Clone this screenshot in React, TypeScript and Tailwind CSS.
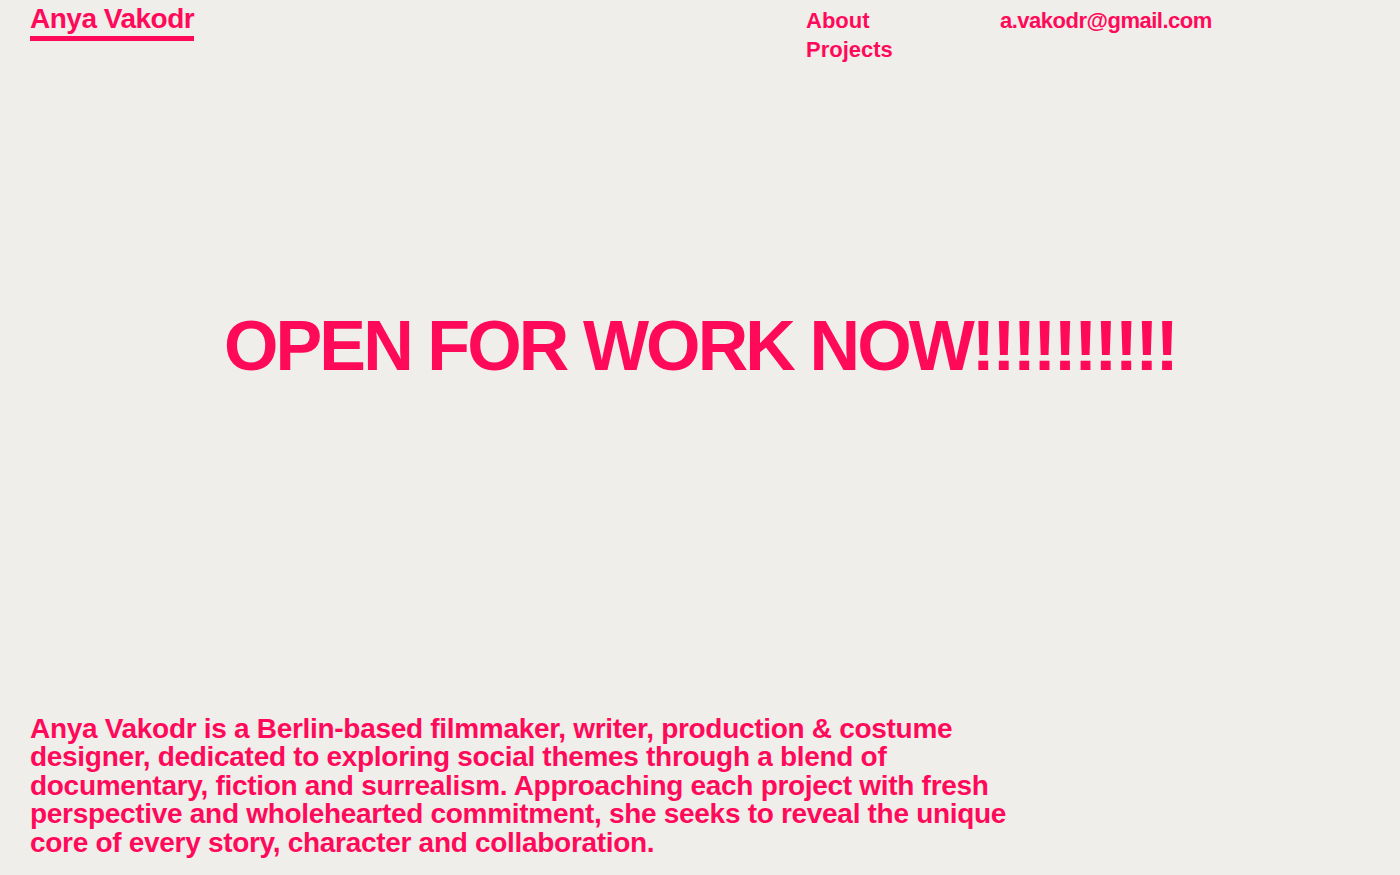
const pink = 'text-[#ff0a5a]';

const Header = () => {
    return (
        <header className="flex items-start px-[30px] pt-[3px]">
            <a href="#" className="block w-[776px]">
                <span className="inline-block border-b-[5px] border-[#ff0a5a] pb-[1px] text-[28px] leading-[32px] tracking-[-0.5px]">
                    Anya Vakodr
                </span>
            </a>
            <nav className="flex w-[194px] flex-col pt-[4px] text-[22px] leading-[28.5px]">
                <a href="#">About</a>
                <a href="#">Projects</a>
            </nav>
            <a href="#" className="pt-[4px] text-[22px] leading-[28.5px] tracking-[-0.5px]">
                a.vakodr@gmail.com
            </a>
        </header>
    );
};

export default function App() {
    return (
        <div
            className={`flex min-h-screen flex-col bg-[#f0eeea] font-bold ${pink}`}
            style={{ fontFamily: '"Liberation Sans", Arial, sans-serif' }}
        >
            <Header />
            <main className="flex justify-center pt-[242px]">
                <h1 className="text-[70px] leading-[80px] tracking-[-2.9px]">OPEN FOR WORK NOW!!!!!!!!!!</h1>
            </main>
            <section className="mt-auto px-[30px] pb-[18px]">
                <p className="text-[28px] leading-[28.5px] tracking-[-0.3px]">
                    Anya Vakodr is a Berlin-based filmmaker, writer, production &amp; costume
                    <br />
                    designer, dedicated to exploring social themes through a blend of
                    <br />
                    documentary, fiction and surrealism. Approaching each project with fresh
                    <br />
                    perspective and wholehearted commitment, she seeks to reveal the unique
                    <br />
                    core of every story, character and collaboration.
                </p>
            </section>
        </div>
    );
}
